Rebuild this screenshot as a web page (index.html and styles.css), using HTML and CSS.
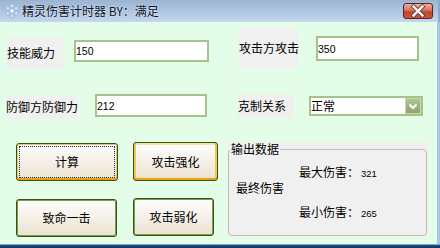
FILE: index.html
```html
<!DOCTYPE html>
<html>
<head>
<meta charset="utf-8">
<link rel="stylesheet" href="styles.css">
</head>
<body>
<div class="window">
  <div class="titlebar">
    <svg class="app-icon" viewBox="0 0 16 16">
      <g fill="#c9ddf5" stroke="#8fb1dc" stroke-width="0.8">
        <circle cx="8" cy="3" r="2.2"/>
        <circle cx="8" cy="13" r="2.2"/>
        <circle cx="3.7" cy="5.5" r="2.2"/>
        <circle cx="12.3" cy="5.5" r="2.2"/>
        <circle cx="3.7" cy="10.5" r="2.2"/>
        <circle cx="12.3" cy="10.5" r="2.2"/>
        <circle cx="8" cy="8" r="2.4" fill="#eef5fd"/>
      </g>
    </svg>
    <span class="title">精灵伤害计时器 BY<span class="colon">：</span>满足</span>
    <div class="close">
      <svg viewBox="0 0 30 16" width="30" height="16">
        <path d="M10.5 3.5 L19.5 12.5 M19.5 3.5 L10.5 12.5" stroke="#6e3a3a" stroke-width="4.2" stroke-linecap="square"/>
        <path d="M10.5 3.5 L19.5 12.5 M19.5 3.5 L10.5 12.5" stroke="#ffffff" stroke-width="2.4" stroke-linecap="square"/>
      </svg>
    </div>
  </div>
  <div class="body">
    <div class="row row1">
      <div class="label l1">技能威力</div>
      <div class="input i1">150</div>
      <div class="label l3">攻击方攻击</div>
      <div class="input i3">350</div>
    </div>
    <div class="row row2">
      <div class="label l2">防御方防御力</div>
      <div class="input i2">212</div>
      <div class="label l4">克制关系</div>
      <div class="select">
        <span class="sel-text">正常</span>
        <span class="sel-arrow">
          <svg viewBox="0 0 16 16" width="16" height="16">
            <path d="M4.5 6.5 L8 10 L11.5 6.5" fill="none" stroke="#ffffff" stroke-width="2.2"/>
          </svg>
        </span>
      </div>
    </div>
    <div class="row row3">
      <div class="buttons">
        <button class="btn b1 focused">计算</button>
        <button class="btn b2 hot">攻击强化</button>
        <button class="btn b3">致命一击</button>
        <button class="btn b4">攻击弱化</button>
      </div>
      <div class="group">
        <fieldset>
          <legend>输出数据</legend>
          <div class="out-grid">
            <span class="max">最大伤害：<span class="num">321</span></span>
            <span class="final">最终伤害</span>
            <span class="min">最小伤害：<span class="num">265</span></span>
          </div>
        </fieldset>
      </div>
    </div>
  </div>
  <div class="taskbar"></div>
</div>
</body>
</html>
```
FILE: styles.css
```css
* { box-sizing: border-box; }
html, body { margin: 0; padding: 0; }
body {
  width: 440px;
  height: 248px;
  overflow: hidden;
  font-family: "Noto Sans CJK SC", sans-serif;
  font-size: 12px;
  color: #000;
}
.window {
  width: 440px;
  height: 248px;
  display: flex;
  flex-direction: column;
}
.titlebar {
  height: 22px;
  flex: none;
  display: flex;
  align-items: center;
  padding: 0 5px 0 4px;
  background: linear-gradient(#9bb4d2, #c4d7ed);
  border-right: 2px solid #8aa9cf;
}
.app-icon { width: 16px; height: 16px; flex: none; }
.title {
  margin-left: 2px;
  line-height: 14px;
  color: #0b1426;
  text-shadow: 0 0 2px rgba(255,255,255,0.8);
}
.colon { display: inline-block; width: 12px; text-align: center; }
.close {
  margin-left: auto;
  width: 30px;
  height: 16px;
  border: 1px solid #5d2226;
  border-radius: 3px;
  background: linear-gradient(#eab19d 0%, #d9745a 45%, #c4462c 55%, #c9583c 100%);
  display: flex;
  align-items: center;
  justify-content: center;
  overflow: hidden;
}
.close svg { flex: none; }
.body {
  flex: 1;
  background: #e3fde9;
  border-right: 3px solid #a9c6e8;
  display: flex;
  flex-direction: column;
}
.row {
  display: flex;
  align-items: flex-start;
  flex: none;
}
.label {
  background: #f0f0f0;
  display: flex;
  align-items: center;
  line-height: 14px;
  white-space: nowrap;
}
.input {
  background: #fff;
  border: 2px solid #a6c28b;
  display: flex;
  align-items: center;
  font-family: "Liberation Sans", sans-serif;
  font-size: 10.5px;
  padding-left: 0;
}
.row1 { margin-top: 6px; height: 40px; }
.l1 { margin: 9px 0 0 7px; width: 56px; height: 32px; }
.i1 { margin: 12px 0 0 11px; width: 135px; height: 22px; }
.l3 { margin: 0 0 0 30px; width: 59px; height: 40px; }
.i3 { margin: 8px 0 0 18px; width: 103px; height: 25px; }
.row2 { margin-top: 26px; height: 25px; }
.l2 { margin: 1px 0 0 6px; width: 72px; height: 24px; }
.i2 { margin: 0 0 0 17px; width: 112px; height: 23px; }
.l4 { margin: 0 0 0 31px; width: 56px; height: 24px; }
.select {
  margin: 2px 0 0 15px;
  width: 114px;
  height: 20px;
  background: #fff;
  border: 2px solid #a6c28b;
  display: flex;
  align-items: center;
}
.sel-text { line-height: 14px; flex: 1; }
.sel-arrow {
  width: 16px;
  height: 16px;
  background: linear-gradient(#b3c595, #8ea468);
  box-shadow: inset 0 0 0 1px #c7d5b0;
  display: flex;
}
.row3 { margin-top: 23px; }
.buttons {
  margin-left: 16px;
  display: grid;
  grid-template-columns: 102px 85px;
  grid-template-rows: 39px 39px;
  column-gap: 15px;
  row-gap: 17px;
  align-items: start;
  justify-items: start;
}
.btn {
  font-family: "Noto Sans CJK SC", sans-serif;
  font-size: 12px;
  line-height: 14px;
  color: #000;
  padding: 0;
  border: 1px solid #2f5907;
  border-radius: 3px;
  background: linear-gradient(#ffffff, #ebe1cf);
  box-shadow: inset 0 0 0 1px #7c9a58;
}
.b1 { margin-top: 1px; width: 102px; height: 38px; }
.b2 { width: 85px; height: 39px; }
.b3 { margin-top: 1px; width: 101px; height: 38px; }
.b4 { width: 81px; height: 38px; }
.hot {
  box-shadow: inset 0 -2px 0 #efa00e, inset 2px 0 0 #f5c25c, inset -2px 0 0 #f5c25c, inset 0 2px 0 #fde2aa;
}
.focused {
  box-shadow: inset 0 -2px 0 #efa00e, inset 0 0 0 1px #e8c27a;
  outline: 1px dotted #1a2a60;
  outline-offset: -4px;
}
.group {
  margin-left: 9px;
  width: 201px;
  height: 95px;
  background: #f0f0f0;
}
fieldset {
  margin: 0 1px;
  padding: 0;
  border: 1px solid #bdbdbd;
  border-radius: 4px;
  height: 94px;
  min-width: 0;
}
legend {
  padding: 0 1px;
  margin-left: 1px;
  line-height: 14px;
}
.out-grid {
  margin-top: 9px;
  padding-left: 7px;
  display: grid;
  grid-template-columns: 63px auto;
  grid-template-rows: 16px 24px 14px;
  line-height: 14px;
  white-space: nowrap;
}
.max { grid-column: 2; grid-row: 1; }
.final { grid-column: 1; grid-row: 2; }
.min { grid-column: 2; grid-row: 3; }
.num {
  font-family: "Liberation Sans", sans-serif;
  font-size: 9.5px;
  margin-left: 2px;
}
.taskbar {
  height: 4px;
  flex: none;
  background: linear-gradient(#5fb2ee 0, #5fb2ee 1px, #2a4a78 1px, #1c3050 100%);
}
```
